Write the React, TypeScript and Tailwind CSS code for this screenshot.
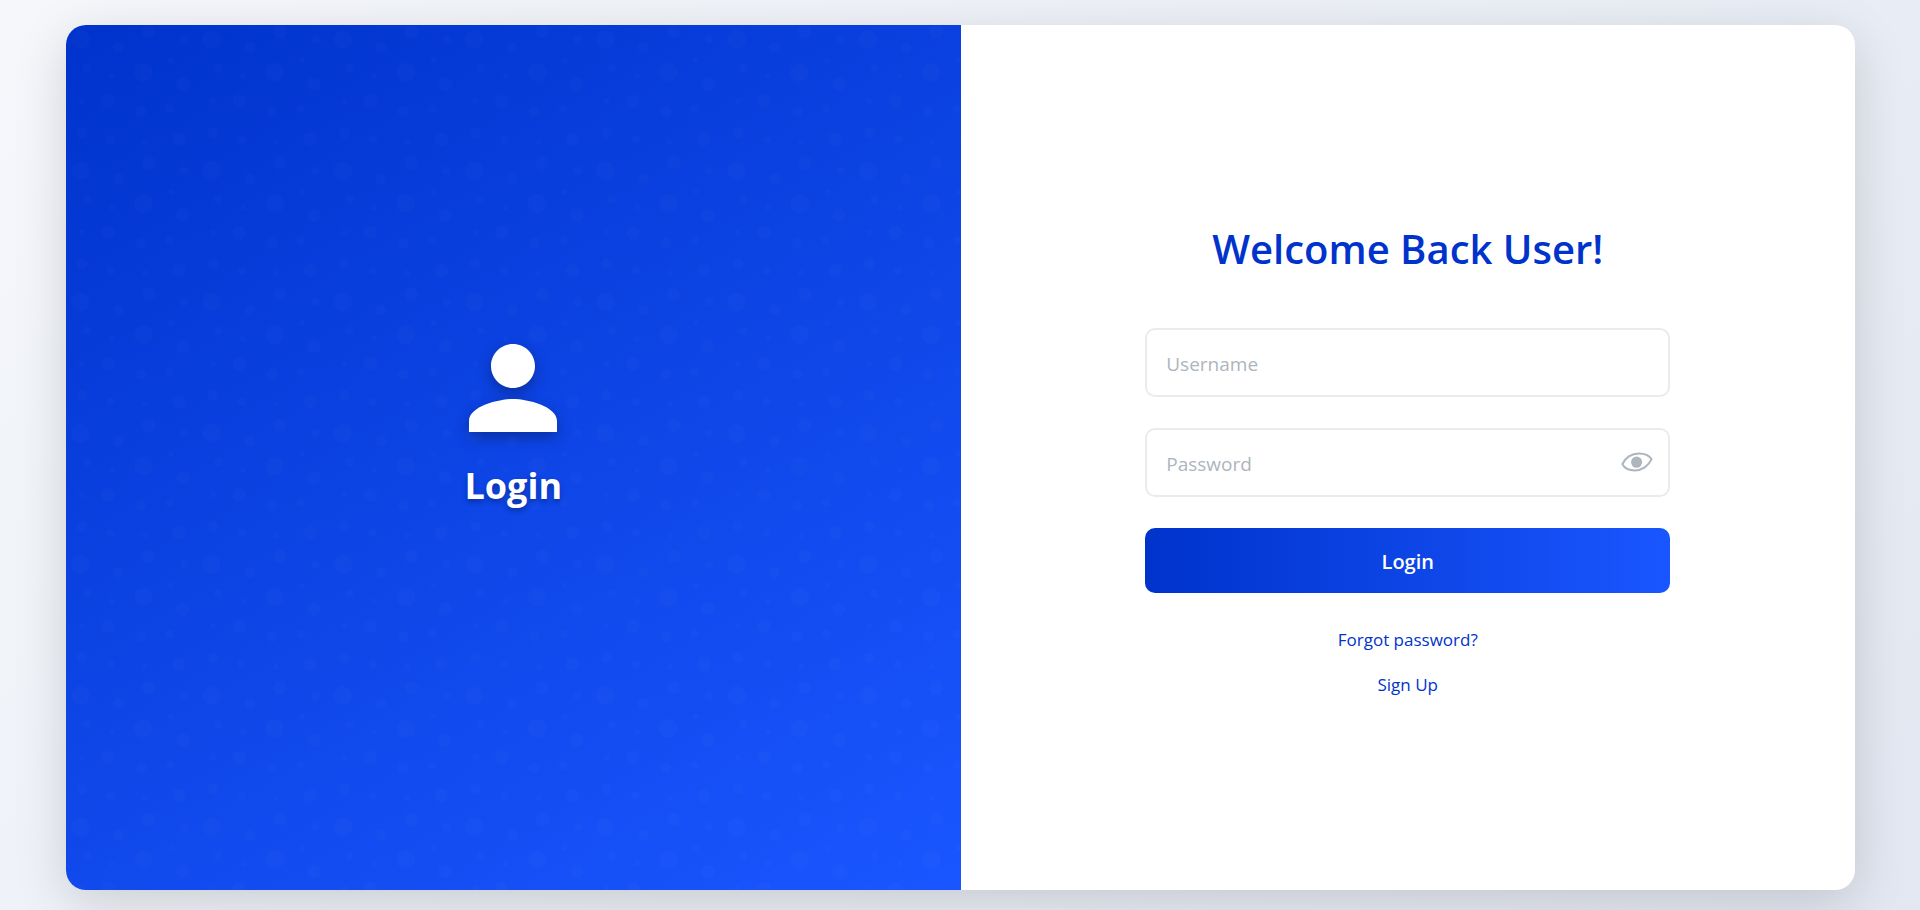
import { useState } from "react";

// Bubbles of one 100 x 100 tile: centre x, centre y, radius
const bubbles: [number, number, number][] = [
  [11, 11, 7],
  [59, 36, 7],
  [16, 33, 3],
  [79, 64, 3],
  [34, 87, 3],
  [90, 11, 3],
  [12, 82, 4],
  [40, 17, 4],
  [63, 5, 5],
  [57, 66, 4],
  [86, 87, 5],
  [32, 58, 5],
  [89, 45, 5],
  [80, 27, 2],
  [60, 89, 2],
  [35, 39, 2],
  [12, 58, 2],
];

function BubblePattern() {
  return (
    <svg className="absolute inset-0 size-full" aria-hidden="true">
      <defs>
        <pattern
          id="bubbles"
          width="100"
          height="100"
          patternUnits="userSpaceOnUse"
          patternTransform="scale(1.3125)"
        >
          {bubbles.map(([cx, cy, r]) => (
            <circle key={`${cx}-${cy}`} cx={cx} cy={cy} r={r} fill="#ffffff" fillOpacity="0.016" />
          ))}
        </pattern>
      </defs>
      <rect width="100%" height="100%" fill="url(#bubbles)" />
    </svg>
  );
}

function PersonIcon() {
  return (
    <svg
      viewBox="0 0 24 24"
      fill="currentColor"
      className="size-[132px] drop-shadow-[0_5px_7px_rgba(0,0,0,0.3)]"
      aria-hidden="true"
    >
      <path d="M12 12c2.21 0 4-1.79 4-4s-1.79-4-4-4-4 1.79-4 4 1.79 4 4 4zm0 2c-2.67 0-8 1.34-8 4v2h16v-2c0-2.66-5.33-4-8-4z" />
    </svg>
  );
}

function EyeIcon() {
  return (
    <svg viewBox="0 0 32 20" className="h-5 w-8" aria-hidden="true">
      <path
        d="M1.4 12.2C4 5.8 10.5 1.4 18 1.4c6 0 10.3 2.2 12.6 5.8C27.5 14 21 18.4 13.8 18.4 7.8 18.4 3.6 16.3 1.4 12.2Z"
        fill="none"
        stroke="currentColor"
        strokeWidth="2"
        strokeLinejoin="round"
      />
      <ellipse cx="15.6" cy="10.2" rx="5.5" ry="5.6" fill="currentColor" />
    </svg>
  );
}

const inputClass =
  "h-[69px] w-full rounded-[10px] border-2 border-[#e9ecef] bg-white px-[19px] pt-1 text-[19px] text-[#212529] outline-none placeholder:text-[#adb5bd] focus:border-[#0033cc]";

export default function App() {
  const [visible, setVisible] = useState(false);

  return (
    <div className="flex min-h-screen bg-[linear-gradient(135deg,#f5f7fb,#e2e7f1)] pt-[25px] pr-[65px] pb-5 pl-[66px] font-['Open_Sans','Noto_Sans',sans-serif]">
      <main className="flex flex-1 overflow-hidden rounded-[20px] bg-white shadow-[0_13px_52px_rgba(0,0,0,0.15)]">
        <section className="relative flex w-1/2 flex-col items-center justify-center bg-[linear-gradient(150deg,#0033cc,#1a56ff)] pb-[76px] text-white">
          <BubblePattern />
          <div className="relative flex flex-col items-center">
            <PersonIcon />
            <p className="text-[36px] leading-[64px] font-bold [text-shadow:0_3px_5px_rgba(0,0,0,0.3)]">Login</p>
          </div>
        </section>

        <section className="flex w-1/2 flex-col items-center justify-center px-10 pt-0.5">
          <h1 className="mb-[51px] text-[40px] leading-[56px] font-semibold text-[#0033cc]">Welcome Back User!</h1>
          <form className="w-full max-w-[525px]" onSubmit={(e) => e.preventDefault()}>
            <input aria-label="Username" type="text" placeholder="Username" className={inputClass} />
            <div className="relative mt-[31px]">
              <input
                aria-label="Password"
                type={visible ? "text" : "password"}
                placeholder="Password"
                className={inputClass}
              />
              <button
                type="button"
                aria-label="Toggle password visibility"
                onClick={() => setVisible(!visible)}
                className="absolute top-6 right-[17px] text-[#adb5bd]"
              >
                <EyeIcon />
              </button>
            </div>
            <button
              type="submit"
              className="mt-[31px] h-[65px] w-full rounded-[10px] bg-[linear-gradient(90deg,#0033cc,#1a56ff)] pt-1 text-[20px] font-semibold text-white"
            >
              Login
            </button>
          </form>
          <nav className="mt-[35px] flex flex-col items-center gap-[21px] text-[17px] leading-6 text-[#0033cc]">
            <a href="#forgot-password">Forgot password?</a>
            <a href="#sign-up">Sign Up</a>
          </nav>
        </section>
      </main>
    </div>
  );
}
